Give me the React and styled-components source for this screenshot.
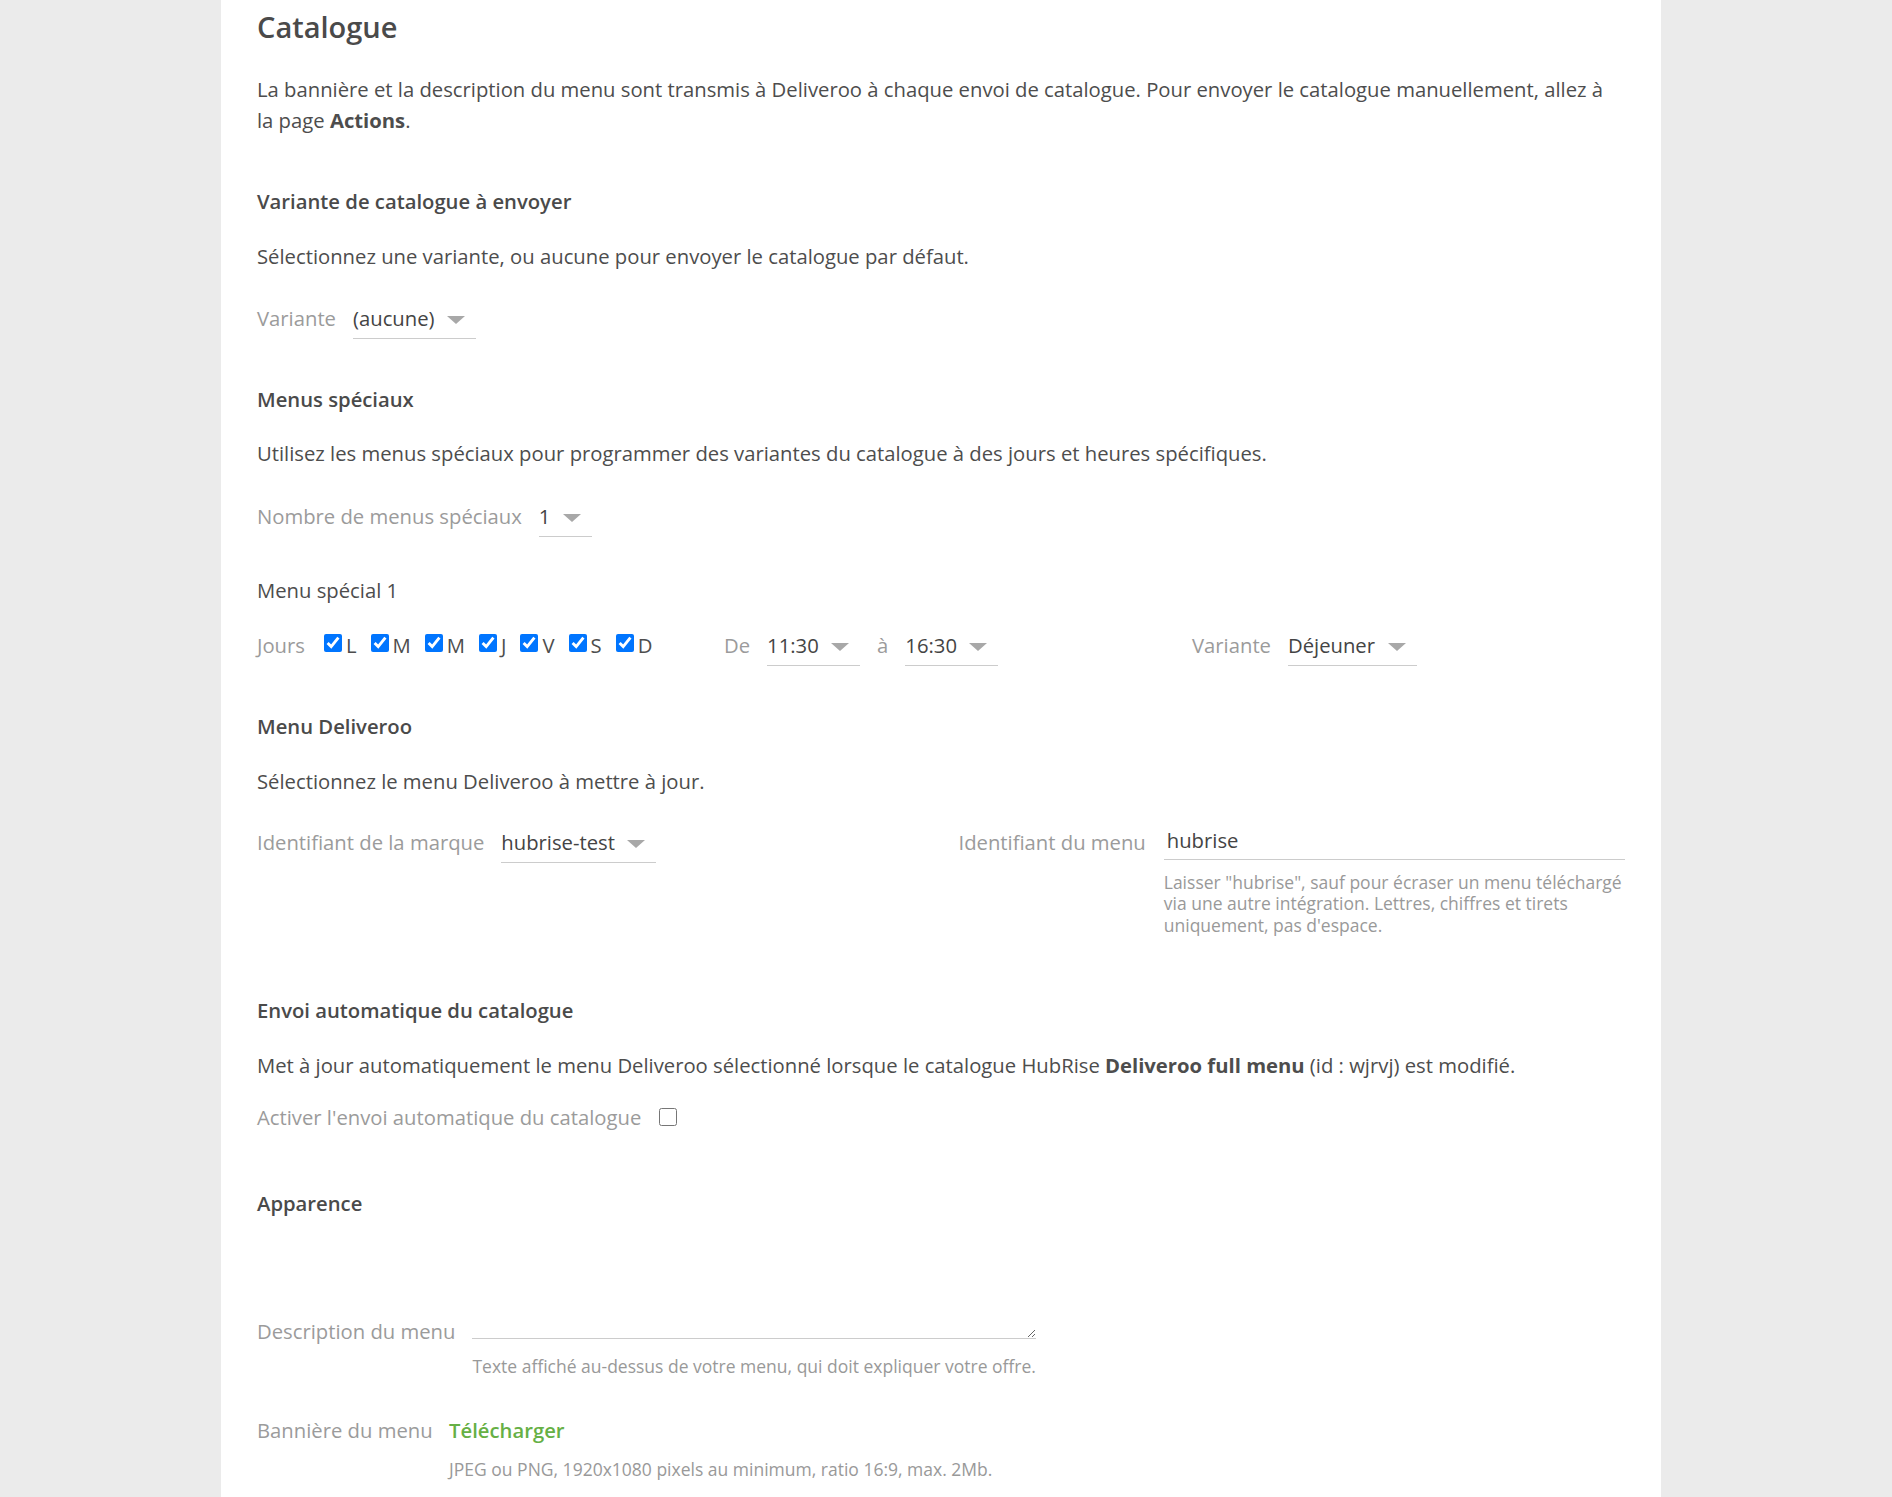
import React from 'react';
import styled, { createGlobalStyle } from 'styled-components';

const FONT = '"Open Sans", "Noto Sans", sans-serif';
const BODY = 20.25;
const HELP = 17.5;

const GlobalStyle = createGlobalStyle`
  html, body { margin: 0; padding: 0; }
  body {
    background: #ebebeb;
    font-family: ${FONT};
    color: #4a4a4a;
    font-size: ${BODY}px;
    line-height: 31px;
  }
`;

const Page = styled.div`
  padding-left: 221px;
  min-height: 1497px;
`;

const Card = styled.main`
  width: 1440px;
  box-sizing: border-box;
  background: #fff;
  padding: 9px 36px 60px;
  min-height: 1497px;
`;

const Title = styled.h1`
  margin: 0;
  font-size: 29px;
  line-height: 36px;
  font-weight: 600;
  color: #4a4a4a;
`;

const Text = styled.p`
  margin: ${(p) => p.$mt || 0}px 0 0;
  font-size: ${BODY}px;
  line-height: 31px;
  color: #4d4d4d;
  b { font-weight: 700; }
`;

const SectionTitle = styled.h2`
  margin: ${(p) => p.$mt || 0}px 0 0;
  font-size: ${BODY}px;
  line-height: 31px;
  font-weight: 600;
  color: #4a4a4a;
`;

const SubTitle = styled.h3`
  margin: ${(p) => p.$mt || 0}px 0 0;
  font-size: ${BODY}px;
  line-height: 31px;
  font-weight: 400;
  color: #4d4d4d;
`;

const FieldRow = styled.div`
  display: flex;
  align-items: flex-start;
  gap: ${(p) => p.$gap || 17}px;
  margin-top: ${(p) => p.$mt || 0}px;
  padding-top: ${(p) => p.$pt || 0}px;
`;

const Label = styled.label`
  color: #9b9b9b;
  font-size: ${BODY}px;
  line-height: 31px;
  white-space: nowrap;
`;

const SelectWrap = styled.span`
  position: relative;
  display: inline-block;
  &::after {
    content: '';
    position: absolute;
    right: 11px;
    top: 13px;
    border-left: 9px solid transparent;
    border-right: 9px solid transparent;
    border-top: 8px solid #a8a8a8;
    pointer-events: none;
  }
`;

const Select = styled.select`
  appearance: none;
  -webkit-appearance: none;
  border: 0;
  border-bottom: 1px solid #cccccc;
  border-radius: 0;
  background: transparent;
  font-family: ${FONT};
  font-size: ${BODY}px;
  line-height: 31px;
  height: 36px;
  box-sizing: border-box;
  color: #444;
  padding: 0 41px 4px 0;
  margin: 0;
  outline: none;
`;

const ScheduleRow = styled.div`
  display: grid;
  grid-template-columns: 467px 468px 1fr;
  align-items: start;
  margin-top: ${(p) => p.$mt || 0}px;
`;

const Days = styled.div`
  display: flex;
  align-items: center;
  height: 31px;
`;

const DaysLabel = styled(Label)`
  margin-right: 19px;
`;

const Day = styled.label`
  display: inline-flex;
  align-items: center;
  margin-right: 14px;
  color: #4d4d4d;
  font-size: ${BODY}px;
  line-height: 31px;
`;

const Check = styled.input`
  width: 18px;
  height: 18px;
  margin: 0 4px 4px 0;
  accent-color: #0075ff;
`;

const TwoCols = styled.div`
  display: grid;
  grid-template-columns: 1fr 1fr;
  column-gap: 35px;
  align-items: start;
  margin-top: ${(p) => p.$mt || 0}px;
`;

const InputField = styled.div`
  display: grid;
  grid-template-columns: auto 1fr;
  column-gap: 18px;
  align-items: center;
`;

const TextInput = styled.input`
  border: 0;
  border-bottom: 1px solid #cccccc;
  font-family: ${FONT};
  font-size: ${BODY}px;
  line-height: 31px;
  height: 35px;
  box-sizing: border-box;
  padding: 0 0 3px 3px;
  color: #444;
  outline: none;
  width: 100%;
`;

const Help = styled.div`
  grid-column: 2;
  margin-top: ${(p) => p.$mt || 0}px;
  font-size: ${HELP}px;
  line-height: 21.7px;
  color: #999;
`;

const AutoCheck = styled.input`
  width: 18px;
  height: 18px;
  margin: 6px 0 0;
`;

const StackField = styled.div`
  display: grid;
  grid-template-columns: auto max-content;
  justify-content: start;
  column-gap: ${(p) => p.$gap || 17}px;
  margin-top: ${(p) => p.$mt || 0}px;
`;

const EndLabel = styled(Label)`
  align-self: end;
  margin-bottom: -8px;
`;

const TextArea = styled.textarea`
  width: 100%;
  height: 64px;
  box-sizing: border-box;
  border: 0;
  border-bottom: 1px solid #cccccc;
  font-family: ${FONT};
  font-size: ${BODY}px;
  outline: none;
  padding: 0;
  margin: 0;
  display: block;
`;

const UploadLink = styled.a`
  color: #66b045;
  font-weight: 600;
  text-decoration: none;
  font-size: ${BODY}px;
  line-height: 31px;
  cursor: pointer;
`;

const days = ['L', 'M', 'M', 'J', 'V', 'S', 'D'];

export default function App() {
  return (
    <>
      <GlobalStyle />
      <Page>
        <Card>
          <Title>Catalogue</Title>
          <Text $mt={28.5}>
            La bannière et la description du menu sont transmis à Deliveroo à chaque envoi de catalogue. Pour envoyer le catalogue manuellement, allez à
            <br />
            la page <b>Actions</b>.
          </Text>

          <SectionTitle $mt={50.5}>Variante de catalogue à envoyer</SectionTitle>
          <Text $mt={23.5}>Sélectionnez une variante, ou aucune pour envoyer le catalogue par défaut.</Text>
          <FieldRow $mt={31.5}>
            <Label>Variante</Label>
            <SelectWrap>
              <Select defaultValue="none">
                <option value="none">(aucune)</option>
              </Select>
            </SelectWrap>
          </FieldRow>

          <SectionTitle $mt={45}>Menus spéciaux</SectionTitle>
          <Text $mt={23}>Utilisez les menus spéciaux pour programmer des variantes du catalogue à des jours et heures spécifiques.</Text>
          <FieldRow $mt={32}>
            <Label>Nombre de menus spéciaux</Label>
            <SelectWrap>
              <Select defaultValue="1">
                <option value="1">1</option>
              </Select>
            </SelectWrap>
          </FieldRow>

          <SubTitle $mt={37.5}>Menu spécial 1</SubTitle>
          <ScheduleRow $mt={24}>
            <Days>
              <DaysLabel>Jours</DaysLabel>
              {days.map((d, i) => (
                <Day key={i}>
                  <Check type="checkbox" defaultChecked />
                  {d}
                </Day>
              ))}
            </Days>
            <FieldRow>
              <Label>De</Label>
              <SelectWrap>
                <Select defaultValue="1130">
                  <option value="1130">11:30</option>
                </Select>
              </SelectWrap>
              <Label>à</Label>
              <SelectWrap>
                <Select defaultValue="1630">
                  <option value="1630">16:30</option>
                </Select>
              </SelectWrap>
            </FieldRow>
            <FieldRow>
              <Label>Variante</Label>
              <SelectWrap>
                <Select defaultValue="dej">
                  <option value="dej">Déjeuner</option>
                </Select>
              </SelectWrap>
            </FieldRow>
          </ScheduleRow>

          <SectionTitle $mt={45}>Menu Deliveroo</SectionTitle>
          <Text $mt={24}>Sélectionnez le menu Deliveroo à mettre à jour.</Text>
          <TwoCols $mt={28}>
            <FieldRow $pt={2.5}>
              <Label>Identifiant de la marque</Label>
              <SelectWrap>
                <Select defaultValue="hubrise-test">
                  <option value="hubrise-test">hubrise-test</option>
                </Select>
              </SelectWrap>
            </FieldRow>
            <InputField>
              <Label>Identifiant du menu</Label>
              <TextInput type="text" defaultValue="hubrise" />
              <Help $mt={12}>
                Laisser "hubrise", sauf pour écraser un menu téléchargé
                <br />
                via une autre intégration. Lettres, chiffres et tirets
                <br />
                uniquement, pas d'espace.
              </Help>
            </InputField>
          </TwoCols>

          <SectionTitle $mt={58}>Envoi automatique du catalogue</SectionTitle>
          <Text $mt={24.5}>
            Met à jour automatiquement le menu Deliveroo sélectionné lorsque le catalogue HubRise <b>Deliveroo full menu</b> (id : wjrvj) est modifié.
          </Text>
          <FieldRow $mt={20.5} $gap={18}>
            <Label>Activer l'envoi automatique du catalogue</Label>
            <AutoCheck type="checkbox" />
          </FieldRow>

          <SectionTitle $mt={55}>Apparence</SectionTitle>
          <StackField $mt={56.5}>
            <EndLabel>Description du menu</EndLabel>
            <TextArea />
            <Help $mt={17}>Texte affiché au-dessus de votre menu, qui doit expliquer votre offre.</Help>
          </StackField>

          <StackField $mt={37} $gap={16.5}>
            <Label>Bannière du menu</Label>
            <UploadLink>Télécharger</UploadLink>
            <Help $mt={13}>JPEG ou PNG, 1920x1080 pixels au minimum, ratio 16:9, max. 2Mb.</Help>
          </StackField>
        </Card>
      </Page>
    </>
  );
}
